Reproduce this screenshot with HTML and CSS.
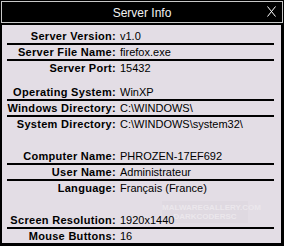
FILE: index.html
```html
<!DOCTYPE html>
<html lang="en">
<head>
    <meta charset="UTF-8">
    <title>Server Info</title>
    <link rel="stylesheet" href="styles.css">
</head>
<body>
    <div class="window">
        <div class="titlebar">
            <span class="title">Server Info</span>
            <svg class="close" width="9" height="11" viewBox="0 0 9 11">
                <path d="M0.5 0.5 L8.5 10.5 M8.5 0.5 L0.5 10.5" stroke="#fff" stroke-width="1" fill="none"/>
            </svg>
        </div>

        <div class="content">
            <div class="watermark">
                <div>MALWAREGALLERY.COM</div>
                <div>DARKCODERSC</div>
            </div>

            <div class="row lined"><b>Server Version:</b><span>v1.0</span></div>
            <div class="row lined"><b>Server File Name:</b><span>firefox.exe</span></div>
            <div class="row"><b>Server Port:</b><span>15432</span></div>

            <div class="row lined gap-small"><b>Operating System:</b><span>WinXP</span></div>
            <div class="row lined"><b>Windows Directory:</b><span>C:\WINDOWS\</span></div>
            <div class="row"><b>System Directory:</b><span>C:\WINDOWS\system32\</span></div>

            <div class="row lined gap-big"><b>Computer Name:</b><span>PHROZEN-17EF692</span></div>
            <div class="row lined"><b>User Name:</b><span>Administrateur</span></div>
            <div class="row"><b>Language:</b><span>Français (France)</span></div>

            <div class="row lined gap-big"><b>Screen Resolution:</b><span>1920x1440</span></div>
            <div class="row"><b>Mouse Buttons:</b><span>16</span></div>
        </div>
    </div>
</body>
</html>
```

FILE: styles.css
```css
body {
    margin: 0;
    background-color: #000;
    font-family: "Liberation Sans", Arial, sans-serif;
}
.window {
    width: 284px;
    height: 246px;
    background-color: #000;
    display: flex;
    flex-direction: column;
}
.titlebar {
    box-sizing: border-box;
    height: 22px;
    margin: 1px 1px 0 1px;
    border: 1px solid #c8c8c8;
    background-color: #000;
    display: flex;
    align-items: center;
    justify-content: center;
    position: relative;
}
.title {
    color: #f2f2f2;
    font-size: 12px;
    padding-top: 1px;
}
.close {
    position: absolute;
    right: 6px;
    top: 4px;
}
.content {
    position: relative;
    box-sizing: border-box;
    height: 218px;
    margin: 2px 3px 0 2px;
    padding-top: 4px;
    background-color: #e3dde5;
    display: flex;
    flex-direction: column;
}
.row {
    position: relative;
    display: grid;
    grid-template-columns: 114px 1fr;
    height: 14px;
    line-height: 14px;
    font-size: 11px;
    color: #000;
    white-space: nowrap;
}
.row b {
    text-align: right;
    letter-spacing: 0.3px;
}
.row span {
    padding-left: 4px;
}
.row.lined {
    height: 16px;
}
.row.lined::after {
    content: "";
    position: absolute;
    left: 5px;
    right: 7px;
    bottom: 0;
    height: 2px;
    background-color: #000;
}
.gap-small {
    margin-top: 10px;
}
.gap-big {
    margin-top: 18px;
}
.watermark {
    position: absolute;
    left: 160px;
    top: 176px;
    width: 86px;
    padding: 2px 0;
    background-color: #dfd9e1;
    color: #ebe7ec;
    font-size: 8px;
    font-weight: bold;
    line-height: 9px;
    text-align: center;
}
```
